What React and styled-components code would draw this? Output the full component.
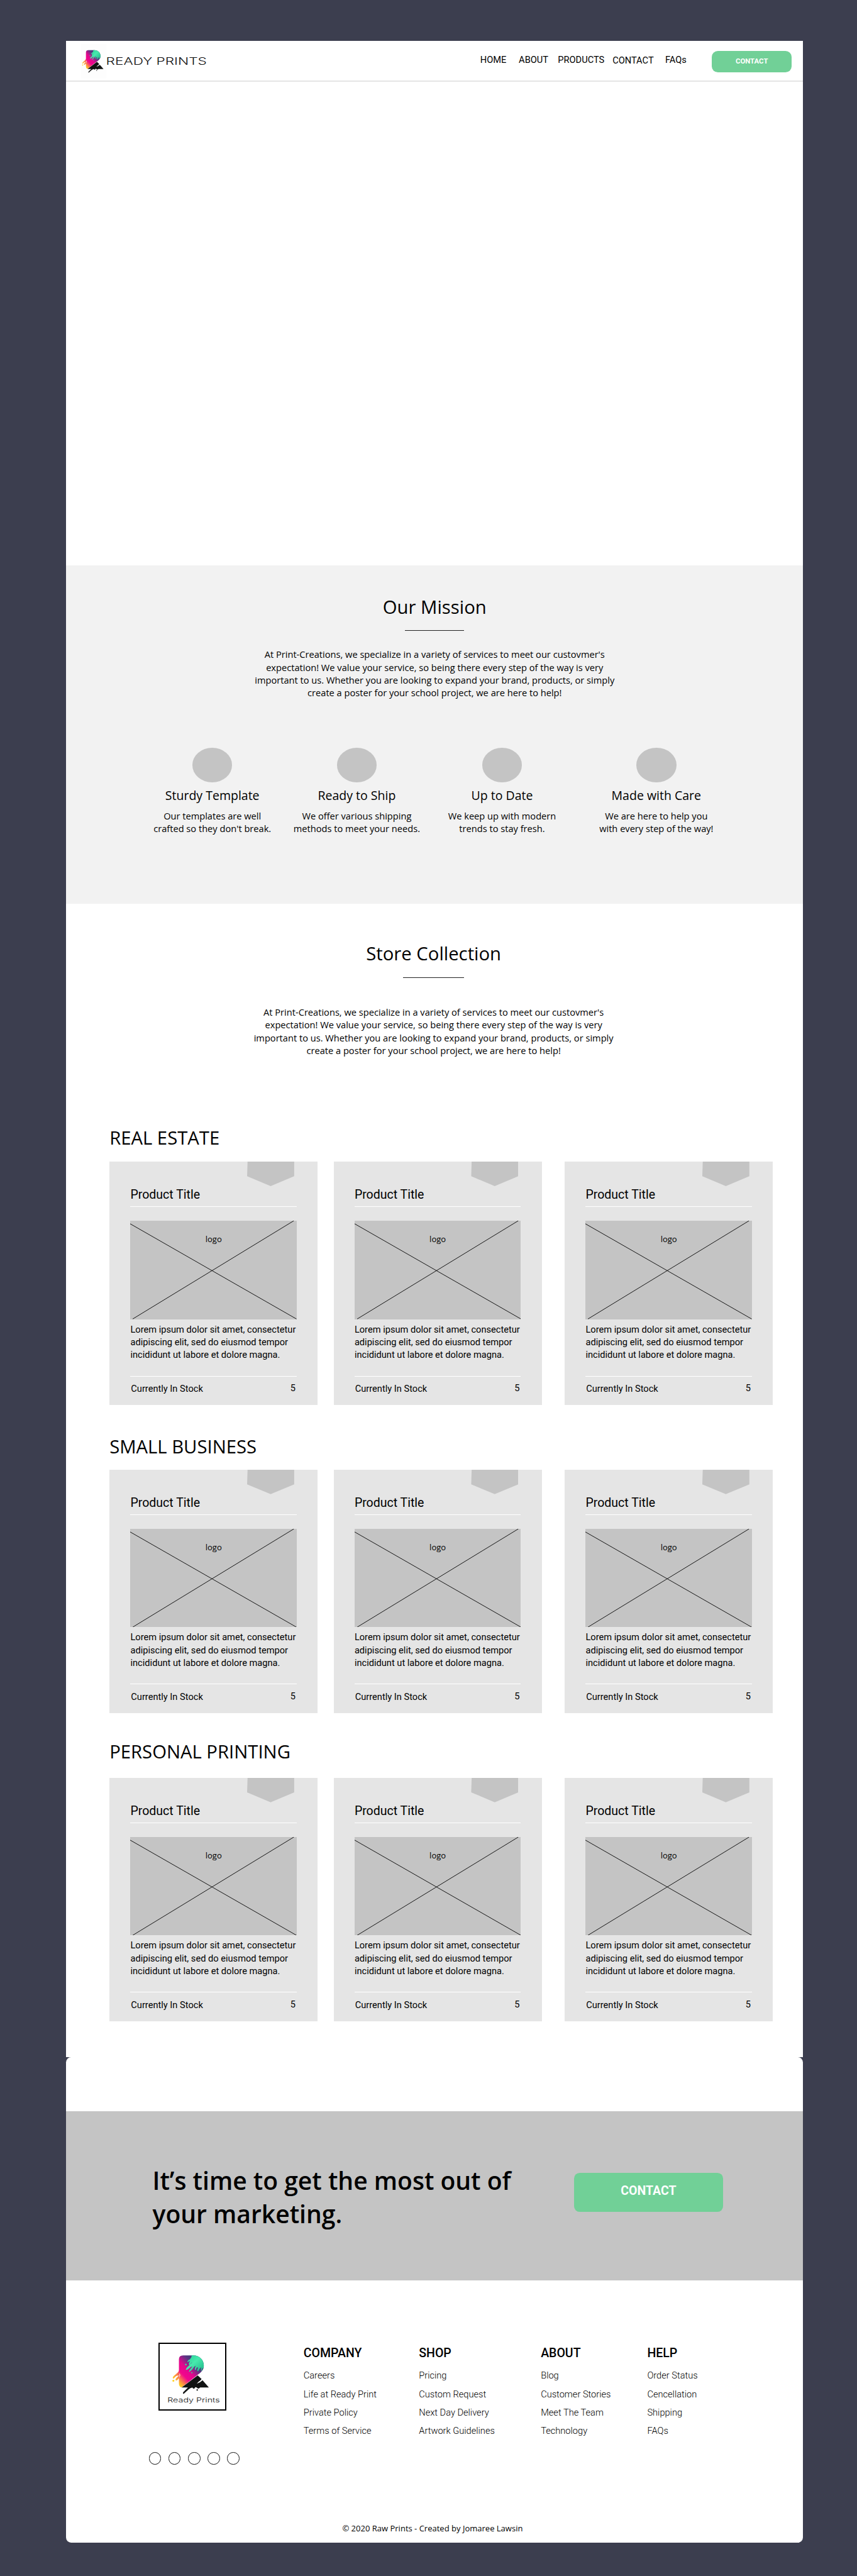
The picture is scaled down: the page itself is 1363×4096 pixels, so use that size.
import React from "react";
import styled, { createGlobalStyle } from "styled-components";

// The design grid is 1675 units wide; u() converts grid units to pixels.
const SCALE = 0.81373;
const u = (n) => `${(n * SCALE).toFixed(3)}px`;

const sans = `"Open Sans", "Noto Sans", sans-serif`;
const roboto = `Roboto, "Liberation Sans", sans-serif`;

const Global = createGlobalStyle`
  * { box-sizing: border-box; margin: 0; padding: 0; }
  html { background: #3c3e4f; }
  body { margin: 0; background: #3c3e4f; color: #000; font-family: ${sans}; }
  ul { list-style: none; }
  h1, h2, h3, h4 { font-weight: 400; }
`;

const Page = styled.div`
  width: 1363px;
  height: 4096px;
  overflow: hidden;
  padding: ${u(80)} 0 0 ${u(129)};
`;

const Board = styled.div`
  width: ${u(1440)};
`;

const Header = styled.header`
  height: ${u(80)};
  display: flex;
  align-items: flex-start;
  background: #fff;
  border-bottom: ${u(3)} solid #e5e5e5;
`;

const Brand = styled.a`
  display: flex;
  width: ${u(809.6)};
  padding: ${u(6)} 0 0 ${u(30)};
`;

const BrandMark = styled.svg`
  width: ${u(49)};
  height: ${u(68)};
  background: #fdfdfd;
  flex: none;
`;

const Wordmark = styled.svg`
  width: ${u(200)};
  height: ${u(68)};
  overflow: visible;
  flex: none;
`;

const WideText = styled.text`
  font-family: Inter, "Liberation Sans", sans-serif;
  font-weight: 300;
  fill: #111;
`;

const Nav = styled.nav`
  display: flex;
  height: ${u(77)};
`;

const NavLink = styled.a`
  width: ${(p) => u(p.$w)};
  padding-top: ${(p) => u(p.$drop ? 28.2 : 27)};
  font: 400 ${u(18)} / ${u(21)} ${roboto};
  white-space: nowrap;
`;

const HeaderButton = styled.button`
  width: ${u(156)};
  height: ${u(42)};
  margin-top: ${u(19)};
  padding-bottom: ${u(1.5)};
  border: 0;
  border-radius: ${u(12)};
  background: #71d097;
  color: #fff;
  font: 700 ${u(14)} / ${u(16)} ${roboto};
`;

const Hero = styled.section`
  height: ${u(945)};
  background: #fff;
`;

const Mission = styled.section`
  height: ${u(661)};
  padding-top: ${u(57.8)};
  background: #f2f2f2;
`;

const Intro = styled.div`
  display: flex;
  flex-direction: column;
  align-items: center;
  text-align: center;
  width: ${(p) => u(p.$w)};
`;

const SectionTitle = styled.h2`
  font: 400 ${u(36)} / ${u(49)} ${sans};
  white-space: nowrap;
`;

const Rule = styled.hr`
  width: ${(p) => u(p.$w)};
  height: 1px;
  border: 0;
  margin: ${(p) => u(p.$top)} 0 ${(p) => u(p.$bottom)};
  background: #222;
`;

const Copy = styled.p`
  font: 400 ${u(18)} / ${u(25)} ${sans};
  white-space: nowrap;
`;

const Features = styled.div`
  display: flex;
  padding: ${u(95)} 0 0 ${u(151)};
`;

const Feature = styled.div`
  display: flex;
  flex-direction: column;
  align-items: center;
  text-align: center;
  width: ${u(270)};
  margin-right: ${(p) => u(p.$gap)};
`;

const Disc = styled.span`
  width: ${u(78)};
  height: ${u(67)};
  border-radius: 50%;
  background: #c4c4c4;
`;

const FeatureTitle = styled.h3`
  margin: ${u(10)} 0 ${u(10)};
  font: 400 ${u(24)} / ${u(33)} ${sans};
`;

const Store = styled.section`
  padding-top: ${u(74.3)};
  height: ${u(2253.5)};
  background: #fff;
`;

const Group = styled.div`
  margin-top: ${(p) => u(p.$top)};
  padding-left: ${u(85)};
`;

const GroupTitle = styled.h2`
  height: ${(p) => u(p.$h)};
  font: 400 ${u(36)} / ${u(49)} ${sans};
`;

const Cards = styled.div`
  display: flex;
`;

const Card = styled.article`
  width: ${u(407)};
  height: ${u(476)};
  margin-right: ${(p) => u(p.$gap)};
  padding: 0 ${u(41)};
  background: #e5e5e5;
  flex: none;
`;

const Tag = styled.span`
  display: block;
  width: ${u(92)};
  height: ${u(48)};
  margin-left: ${u(228)};
  background: #c4c4c4;
  clip-path: polygon(1% 0, 100% 0, 100% 60%, 50% 100%, 0 60%);
`;

const CardTitle = styled.h3`
  height: ${u(41)};
  padding-top: ${u(4)};
  font: 400 ${u(24)} / ${u(28)} ${roboto};
  border-bottom: 1px solid #fff;
`;

const Picture = styled.div`
  display: grid;
  height: ${u(192)};
  margin-top: ${u(27)};
  background: #c4c4c4;
  > * { grid-area: 1 / 1; }
`;

const Cross = styled.svg`
  width: 100%;
  height: 100%;
  stroke: #000;
  stroke-width: 1.1;
`;

const Placeholder = styled.span`
  padding-top: ${u(25.3)};
  text-align: center;
  font: 400 ${u(16)} / ${u(22)} ${sans};
`;

const CardCopy = styled.p`
  height: ${u(112)};
  padding-top: ${u(7.4)};
  border-bottom: 1px solid #fff;
  font: 400 ${u(18)} / ${u(25)} ${roboto};
  white-space: nowrap;
`;

const Stock = styled.div`
  display: flex;
  justify-content: space-between;
  padding: ${u(14.3)} ${u(2.3)} 0 ${u(1)};
  font: 400 ${u(18)} / ${u(21)} ${roboto};
`;

const Count = styled.span`
  margin-top: ${u(-1.5)};
`;

const Closing = styled.div`
  height: ${u(948.5)};
  border-radius: ${u(10)};
  background: #fff;
  padding-top: ${u(105.5)};
`;

const CallToAction = styled.section`
  display: flex;
  height: ${u(331)};
  padding-left: ${u(169)};
  background: #c4c4c4;
`;

const Pitch = styled.h2`
  width: ${u(824)};
  padding-top: ${u(104.3)};
  font: 600 ${u(48)} / ${u(65)} ${sans};
`;

const CtaButton = styled.button`
  width: ${u(291)};
  height: ${u(76)};
  margin-top: ${u(121)};
  padding-bottom: ${u(3)};
  border: 0;
  border-radius: ${u(11)};
  background: #71d097;
  color: #fff;
  font: 700 ${u(24)} / ${u(28)} ${roboto};
`;

const Footer = styled.footer`
  display: flex;
  height: ${u(473.5)};
  padding: ${u(122)} 0 0 ${u(162)};
`;

const FooterBrand = styled.div`
  width: ${u(302.3)};
`;

const Badge = styled.svg`
  display: block;
  width: ${u(132)};
  height: ${u(132)};
  margin-left: ${u(19)};
  outline: 2px solid #000;
  outline-offset: -2px;
`;

const Socials = styled.div`
  display: flex;
  gap: ${u(14.3)};
  margin-top: ${u(82)};
`;

const Social = styled.span`
  width: ${u(24)};
  height: ${u(24)};
  border: 1px solid #111;
  border-radius: 50%;
`;

const Column = styled.div`
  width: ${(p) => u(p.$w)};
  padding-top: ${u(6.8)};
`;

const ColumnTitle = styled.h4`
  font: 500 ${u(24)} / ${u(28)} ${roboto};
  margin-bottom: ${u(12.2)};
`;

const ColumnLink = styled.li`
  font: 300 ${u(18)} / ${u(36)} ${roboto};
  white-space: nowrap;
`;

const Copyright = styled.p`
  padding-left: ${u(540)};
  padding-top: ${u(0.6)};
  font: 400 ${u(16)} / ${u(22)} ${sans};
`;

// Artwork lives in a 75 x 79 box: a gradient R bowl, mint splash and black leg.
function LogoArt({ id }) {
  return (
    <g>
      <defs>
        <linearGradient id={`${id}-ink`} x1="0.1" y1="1" x2="0.85" y2="0.1">
          <stop offset="0" stopColor="#ffd21f" />
          <stop offset="0.12" stopColor="#fb8a45" />
          <stop offset="0.3" stopColor="#f2058d" />
          <stop offset="0.5" stopColor="#e3078d" />
          <stop offset="0.72" stopColor="#5a3583" />
          <stop offset="1" stopColor="#2b3a6b" />
        </linearGradient>
        <linearGradient id={`${id}-drip`} x1="1" y1="0" x2="0" y2="0.8">
          <stop offset="0" stopColor="#f4356f" />
          <stop offset="0.5" stopColor="#fb8a45" />
          <stop offset="1" stopColor="#ffd21f" />
        </linearGradient>
        <linearGradient id={`${id}-mint`} x1="0" y1="0" x2="1" y2="1">
          <stop offset="0" stopColor="#25cf96" />
          <stop offset="0.45" stopColor="#47e9ad" />
          <stop offset="1" stopColor="#1fb486" />
        </linearGradient>
      </defs>
      <path
        fill={`url(#${id}-ink)`}
        d="M22 0H43C56 0 64.6 9 64.6 21C64.6 30 59 35 51 40.5L18.6 66Q13.4 64 13.4 58V48L16 41Q16 37 13.4 36V8Q13.4 0 22 0Z"
      />
      <path
        fill={`url(#${id}-drip)`}
        d="M14 30C12 36 6 39 2 43C-1 47 2 49 4 46C7 42 11 41 13 41.5C11 44 6 47 6.5 50.5C8 53 11 50 12 48L14.5 47V36Z"
      />
      <circle cx="2" cy="52" r="2" fill="#ffd21f" />
      <path
        fill={`url(#${id}-mint)`}
        d="M39.7 0H43C56 0 64.6 9 64.6 21Q64.6 24 63.5 27Q61 25 61 29Q61 33 59 31Q58 28 59 24Q56 26 54 31Q52 34 51 31Q51 28 53 25Q50 23 49 27Q49 31 46 29Q46 25 48 21Q44 23 42 27Q37 33 34 34Q34 31 41 23Q38 23 35 26Q29 31 27.5 29Q28 26 34 21Q39 16 41 13Q38 15 36 19Q33 20 34 16Q36 13 35 11Q32 15 31 13Q31 10 36 8Q40 4 39.7 0Z"
      />
      <circle cx="27.7" cy="18.7" r="1.7" fill="#38dda4" />
      <circle cx="40" cy="35.4" r="1.2" fill="#38dda4" />
      <path
        fill="#111313"
        d="M52 41L60 48.5Q58 52 54 54L50 58Q57 56 62 51L75 66H57Q53 70 50 66Q47 64 46 67Q43 70 41 66Q36 67 33 70L23 79Q21 79 22 76L32 66H19Z"
      />
      <circle cx="51" cy="71" r="1.5" fill="#111313" />
    </g>
  );
}

const NAV = [
  ["HOME", 75.4],
  ["ABOUT", 76.4],
  ["PRODUCTS", 106.8],
  ["CONTACT", 103, true],
  ["FAQs", 91.3],
];

const FEATURES = [
  ["Sturdy Template", ["Our templates are well", "crafted so they don't break."], 12.3],
  ["Ready to Ship", ["We offer various shipping", "methods to meet your needs."], 14],
  ["Up to Date", ["We keep up with modern", "trends to stay fresh."], 31.5],
  ["Made with Care", ["We are here to help you", "with every step of the way!"], 0],
];

const GROUPS = [
  ["REAL ESTATE", 134.3, 70.2],
  ["SMALL BUSINESS", 57.3, 68.7],
  ["PERSONAL PRINTING", 52, 74],
];

const CARD_GAPS = [31, 44.7, 0];

const COLUMNS = [
  ["COMPANY", 225.5, ["Careers", "Life at Ready Print", "Private Policy", "Terms of Service"]],
  ["SHOP", 238.3, ["Pricing", "Custom Request", "Next Day Delivery", "Artwork Guidelines"]],
  ["ABOUT", 208, ["Blog", "Customer Stories", "Meet The Team", "Technology"]],
  ["HELP", 170, ["Order Status", "Cencellation", "Shipping", "FAQs"]],
];

function MissionCopy() {
  return (
    <Copy>
      At Print-Creations, we specialize in a variety of services to meet our custovmer's
      <br />
      expectation! We value your service, so being there every step of the way is very
      <br />
      important to us. Whether you are looking to expand your brand, products, or simply
      <br />
      create a poster for your school project, we are here to help!
    </Copy>
  );
}

function ProductCard({ gap }) {
  return (
    <Card $gap={gap}>
      <Tag />
      <CardTitle>Product Title</CardTitle>
      <Picture>
        <Cross viewBox="0 0 325 192" preserveAspectRatio="none">
          <path d="M0 6L325 192M5 192L320 0" />
        </Cross>
        <Placeholder>logo</Placeholder>
      </Picture>
      <CardCopy>
        Lorem ipsum dolor sit amet, consectetur
        <br />
        adipiscing elit, sed do eiusmod tempor
        <br />
        incididunt ut labore et dolore magna.
      </CardCopy>
      <Stock>
        <span>Currently In Stock</span>
        <Count>5</Count>
      </Stock>
    </Card>
  );
}

export default function App() {
  return (
    <Page>
      <Global />
      <Board>
        <Header>
          <Brand>
            <BrandMark viewBox="0 0 49 68">
              <g transform="translate(2 12) scale(0.557)">
                <LogoArt id="head" />
              </g>
            </BrandMark>
            <Wordmark viewBox="0 0 200 68">
              <WideText x="-0.5" y="40" fontSize="19.3" textLength="197" lengthAdjust="spacingAndGlyphs">
                READY PRINTS
              </WideText>
            </Wordmark>
          </Brand>
          <Nav>
            {NAV.map(([label, w, drop]) => (
              <NavLink key={label} $w={w} $drop={drop}>{label}</NavLink>
            ))}
          </Nav>
          <HeaderButton>CONTACT</HeaderButton>
        </Header>
        <Hero />
        <Mission>
          <Intro $w={1441}>
            <SectionTitle>Our Mission</SectionTitle>
            <Rule $w={115} $top={20.2} $bottom={33} />
            <MissionCopy />
          </Intro>
          <Features>
            {FEATURES.map(([title, lines, gap]) => (
              <Feature key={title} $gap={gap}>
                <Disc />
                <FeatureTitle>{title}</FeatureTitle>
                <Copy>{lines[0]}<br />{lines[1]}</Copy>
              </Feature>
            ))}
          </Features>
        </Mission>
        <Store>
          <Intro $w={1437}>
            <SectionTitle>Store Collection</SectionTitle>
            <Rule $w={120} $top={20} $bottom={54.7} />
            <MissionCopy />
          </Intro>
          {GROUPS.map(([title, top, h]) => (
            <Group key={title} $top={top}>
              <GroupTitle $h={h}>{title}</GroupTitle>
              <Cards>
                {CARD_GAPS.map((gap) => <ProductCard key={gap} gap={gap} />)}
              </Cards>
            </Group>
          ))}
        </Store>
        <Closing>
          <CallToAction>
            <Pitch>It’s time to get the most out of<br />your marketing.</Pitch>
            <CtaButton>CONTACT</CtaButton>
          </CallToAction>
          <Footer>
            <FooterBrand>
              <Badge viewBox="-2 -2 132 132">
                <g transform="translate(25.3 23) scale(0.95)">
                  <LogoArt id="foot" />
                </g>
                <WideText x="15.5" y="114.3" fontSize="12.8" textLength="102.5" lengthAdjust="spacingAndGlyphs">
                  Ready Prints
                </WideText>
              </Badge>
              <Socials>
                {[0, 1, 2, 3, 4].map((n) => <Social key={n} />)}
              </Socials>
            </FooterBrand>
            {COLUMNS.map(([title, w, links]) => (
              <Column key={title} $w={w}>
                <ColumnTitle>{title}</ColumnTitle>
                <ul>
                  {links.map((link) => <ColumnLink key={link}>{link}</ColumnLink>)}
                </ul>
              </Column>
            ))}
          </Footer>
          <Copyright>© 2020 Raw Prints - Created by Jomaree Lawsin</Copyright>
        </Closing>
      </Board>
    </Page>
  );
}
